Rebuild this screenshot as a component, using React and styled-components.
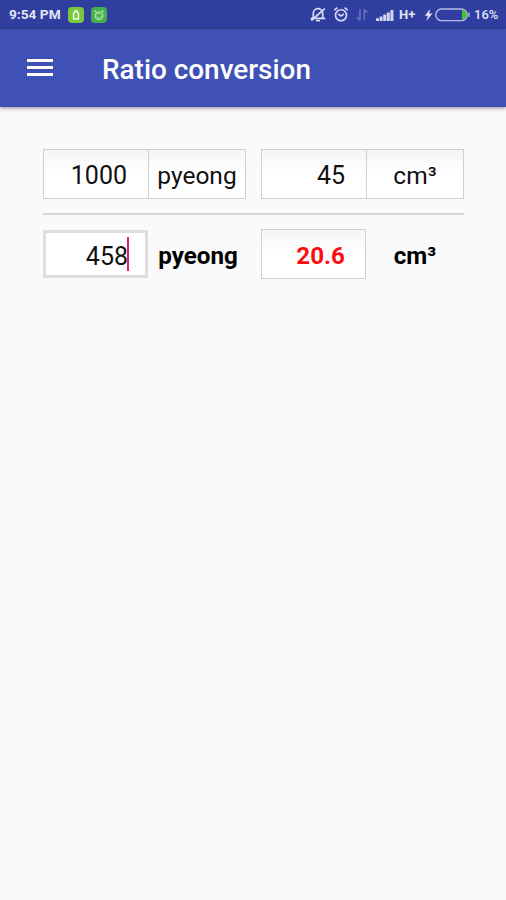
import React from 'react'
import styled, { createGlobalStyle } from 'styled-components'

const App = () => {
  return (
    <Screen>
      <GlobalStyle />
      <StatusBar>
        <Time>9:54 PM</Time>
        <Badge $color="#79c93c">
          <svg width="16" height="16" viewBox="0 0 16 16" fill="none">
            <path d="M5.6 12V6.2L7 5.2V4h2v1.2l1.4 1V12z" stroke="#f0ffe8" strokeWidth="1.5" />
          </svg>
        </Badge>
        <Badge $color="#43ae4b">
          <svg width="16" height="16" viewBox="0 0 16 16" fill="none">
            <circle cx="8" cy="8.7" r="3.9" fill="#79c878" stroke="#a5dfa3" strokeWidth="1.3" />
            <path d="M3.2 5l2-1.7M12.8 5l-2-1.7" stroke="#a5dfa3" strokeWidth="1.6" />
            <path d="M5.9 7.8L8 9.3l2.1-1.5" stroke="#3b9c45" strokeWidth="1.2" />
          </svg>
        </Badge>
        <Spacer />
        <StatusIcons />
        <Network>H+</Network>
        <BatteryIcon />
        <Percent>16%</Percent>
      </StatusBar>
      <AppBar>
        <MenuButton aria-label="Menu">
          <MenuLine />
          <MenuLine />
          <MenuLine />
        </MenuButton>
        <Title>Ratio conversion</Title>
      </AppBar>
      <Content>
        <Row>
          <Field>1000</Field>
          <UnitField>pyeong</UnitField>
          <Gap />
          <Field>45</Field>
          <UnitField>cm³</UnitField>
        </Row>
        <Divider />
        <Row>
          <ActiveField>
            458
            <Cursor />
          </ActiveField>
          <Unit>pyeong</Unit>
          <Gap />
          <Result>20.6</Result>
          <Unit>cm³</Unit>
        </Row>
      </Content>
    </Screen>
  )
}

const StatusIcons = () => (
  <IconStrip width="87" height="20" viewBox="0 0 87 20" fill="none">
    {/* muted bell */}
    <g stroke="#d9dcf5" strokeWidth="1.7">
      <path d="M4.3 12.2V8.6a4.7 4.7 0 0 1 9.4-.6v4.2l1.3 1.2H3z" />
      <path d="M7 15.6h4" />
      <path d="M2.3 15.5L15.8 3.6" />
    </g>
    {/* alarm */}
    <g stroke="#d9dcf5" strokeWidth="1.6">
      <circle cx="32" cy="10.2" r="5.5" />
      <path d="M25.3 5.2l3.1-2.5M38.7 5.2l-3.1-2.5M29.2 9l2.8 2.1L34.8 9" />
    </g>
    {/* data arrows */}
    <path d="M51 4.2v11M51 15.2L48 12M55.3 15.2v-11M55.3 4.2l3 3.2" stroke="#6974c0" strokeWidth="1.5" />
    {/* signal */}
    <path d="M67 13.2h3V16h-3zM70.6 11.4h3V16h-3zM74.2 9.5h3V16h-3zM77.8 7.4h3V16h-3zM81.4 5h3v11h-3z" fill="#d2d6f2" />
  </IconStrip>
)

const BatteryIcon = () => (
  <IconStrip width="47" height="20" viewBox="0 0 47 20" fill="none">
    <path d="M6.3 3.7L.8 10.8h3.1L2.4 16 8.4 8.6H5z" fill="#e4e6f8" />
    <rect x="11.8" y="4" width="31.4" height="11.6" rx="5.8" stroke="#b6bce2" strokeWidth="1.4" />
    <path d="M38 5v9.6h.5c3-.6 4.2-2.5 4.2-4.8S41.500 5.600 38.500 5z" fill="#3fc52f" />
    <path d="M45 7.5v4.6" stroke="#b6bce2" strokeWidth="1.3" />
  </IconStrip>
)

const GlobalStyle = createGlobalStyle`
  body {
    margin: 0;
    background: #fafafa;
    font-family: Roboto, "Noto Sans", sans-serif;
  }

  * {
    box-sizing: border-box;
  }
`;

const Screen = styled.div`
  width: 506px;
  height: 900px;
  overflow: hidden;
  background: #fafafa;
`;

const StatusBar = styled.header`
  display: flex;
  align-items: center;
  height: 29px;
  padding: 0 8px 0 9px;
  background: #303f9f;
  color: #e1e4f7;
  font-size: 13px;
  font-weight: 700;
  line-height: 29px;
  white-space: nowrap;
`;

const Time = styled.span`
  width: 52px;
  font-size: 13.7px;
`;

const Badge = styled.span`
  display: flex;
  width: 16px;
  height: 16px;
  margin-left: 7px;
  border-radius: 4px;
  background: ${(props) => props.$color};
`;

const Spacer = styled.div`
  flex: 1;
`;

const IconStrip = styled.svg`
  flex: none;
`;

const Network = styled.span`
  width: 18px;
  margin: 0 7px 0 3px;
  font-size: 13px;
`;

const Percent = styled.span`
  width: 24px;
  margin-left: 3px;
  font-weight: 500;
  font-size: 13px;
`;

const AppBar = styled.div`
  display: flex;
  align-items: center;
  height: 78px;
  padding: 0 27px;
  background: #3f51b5;
  box-shadow: 0 1px 4px rgba(0, 0, 0, 0.45);
`;

const MenuButton = styled.button`
  all: unset;
  display: flex;
  flex-direction: column;
  gap: 4px;
  width: 26px;
  margin: 0 49px 1px 0;
`;

const MenuLine = styled.span`
  height: 3px;
  background: #fff;
`;

const Title = styled.h1`
  margin: 3px 0 0;
  color: #fff;
  font-size: 27.9px;
  font-weight: 500;
  line-height: 36px;
  white-space: nowrap;
`;

const Content = styled.main`
  padding: 42px 42px 0 43px;
`;

const Row = styled.div`
  display: flex;
  height: 50px;
  color: #111;
  font-size: 25px;
`;

const Gap = styled.div`
  width: 15px;
`;

const Field = styled.div`
  display: flex;
  align-items: center;
  justify-content: flex-end;
  width: 106px;
  padding: 2px 21px 0 0;
  border: 1px solid #d0d0d0;
  background: linear-gradient(#f5f5f5, #fff 50%);
`;

const ActiveField = styled(Field)`
  width: 105px;
  margin: 1px 1px 1px 0;
  padding: 4px 16px 0 0;
  border: 3px solid #dedede;
  background: #fff;
`;

const Result = styled(Field)`
  width: 105px;
  padding: 4px 20px 0 0;
  color: #fc0d12;
  font-weight: 700;
  font-size: 24.2px;
`;

const UnitField = styled(Field)`
  justify-content: center;
  width: 98px;
  margin-left: -1px;
  padding-right: 0;
  font-size: 24.5px;
`;

const Unit = styled.div`
  display: flex;
  align-items: center;
  justify-content: center;
  width: 98px;
  margin-right: -1px;
  padding-top: 4px;
  color: #000;
  font-size: 24.2px;
  font-weight: 700;
`;

const Cursor = styled.span`
  width: 2px;
  height: 34px;
  margin: -4px 0 0 -1px;
  background: #e91e73;
`;

const Divider = styled.div`
  height: 2px;
  margin: 14px 0;
  background: #d6d6d6;
`;

export default App
